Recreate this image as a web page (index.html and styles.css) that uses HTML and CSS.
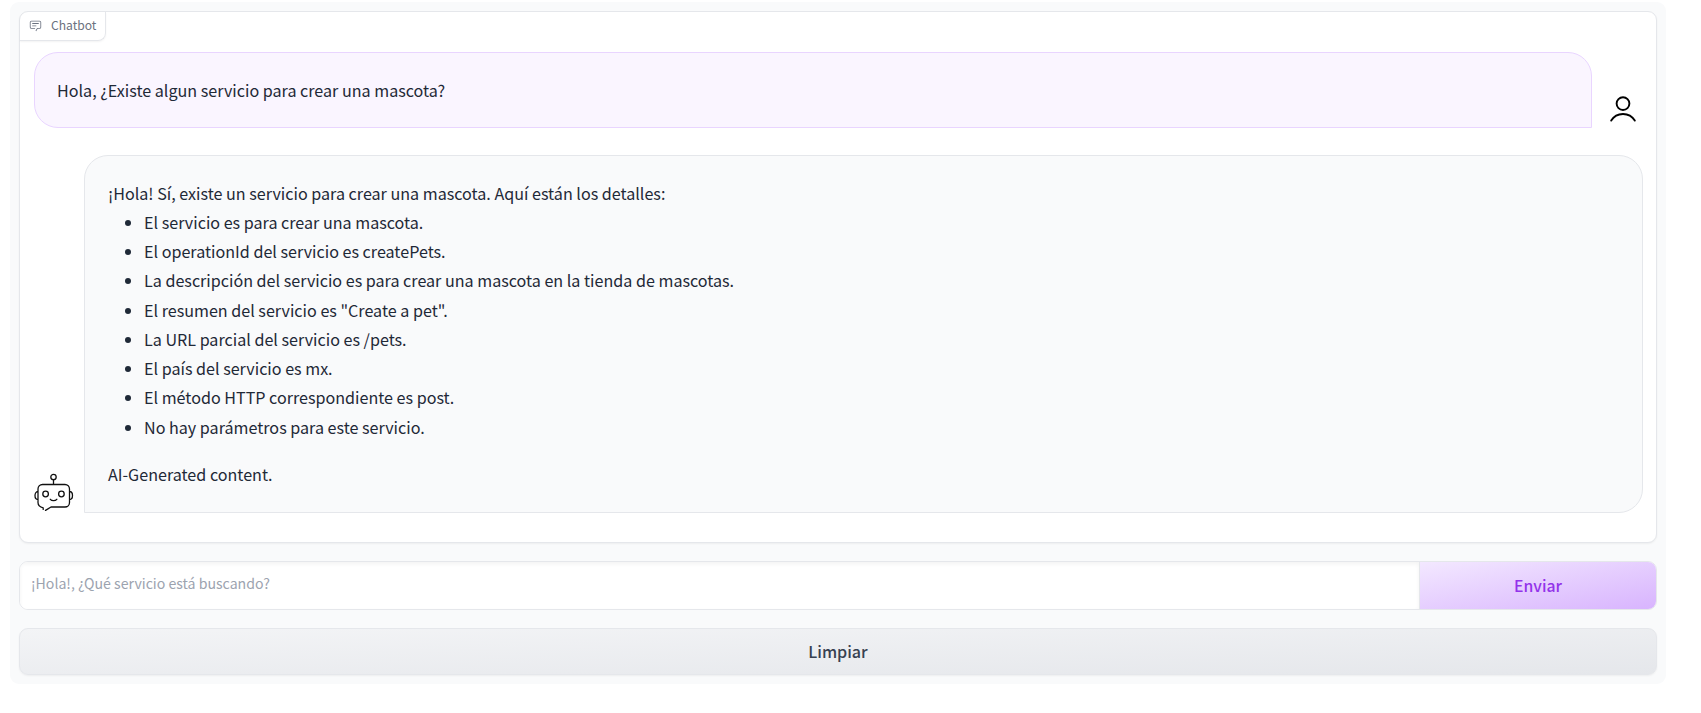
FILE: index.html
```html
<!DOCTYPE html>
<html lang="es">
<head>
<meta charset="utf-8">
<title>Chatbot</title>
<link rel="stylesheet" href="styles.css">
</head>
<body>
<main class="app">
  <section class="panel">
    <div class="label">
      <svg class="label-icon" viewBox="0 0 32 32" fill="currentColor"><path d="M17.74 30 16 29l4-7h6a2 2 0 0 0 2-2V8a2 2 0 0 0-2-2H6a2 2 0 0 0-2 2v12a2 2 0 0 0 2 2h9v2H6a4 4 0 0 1-4-4V8a4 4 0 0 1 4-4h20a4 4 0 0 1 4 4v12a4 4 0 0 1-4 4h-4.84Z"/><path d="M8 10h16v2H8zM8 16h10v2H8z"/></svg>
      <span>Chatbot</span>
    </div>
    <div class="row row-user">
      <div class="bubble bubble-user"><p>Hola, ¿Existe algun servicio para crear una mascota?</p></div>
      <svg class="avatar avatar-user" viewBox="0 0 28 28" fill="none" stroke="#000" stroke-width="1.9" stroke-linecap="round"><circle cx="14" cy="7.6" r="6.4"/><path d="M2.2 24.6C7.5 15.7 20.5 15.7 25.8 24.6"/></svg>
    </div>
    <div class="row row-bot">
      <svg class="avatar avatar-bot" viewBox="0 0 40 40" fill="none" stroke="#111" stroke-width="1.3" stroke-linecap="round" stroke-linejoin="round"><circle cx="19.5" cy="4" r="2.7"/><path d="M19.5 6.8v4.7M9.2 36.4v-1.6C6 34 4 32.3 4 29.5V16a4.5 4.5 0 0 1 4.5-4.5H31a4.5 4.5 0 0 1 4.5 4.5v13.5A4.5 4.5 0 0 1 31 34H17l-5.5 3.4M4 18.5c-4 0-4 8 0 8M35.5 18.5c4 0 4 8 0 8M16.3 26.3c1.500 1.800 5 1.800 6.500 0"/><circle cx="11.6" cy="21" r="2.8"/><circle cx="27.4" cy="21" r="2.8"/></svg>
      <div class="bubble bubble-bot">
        <p>¡Hola! Sí, existe un servicio para crear una mascota. Aquí están los detalles:</p>
        <ul>
          <li>El servicio es para crear una mascota.</li>
          <li>El operationId del servicio es createPets.</li>
          <li>La descripción del servicio es para crear una mascota en la tienda de mascotas.</li>
          <li>El resumen del servicio es "Create a pet".</li>
          <li>La URL parcial del servicio es /pets.</li>
          <li>El país del servicio es mx.</li>
          <li>El método HTTP correspondiente es post.</li>
          <li>No hay parámetros para este servicio.</li>
        </ul>
        <p>AI-Generated content.</p>
      </div>
    </div>
  </section>
  <div class="composer">
    <input class="prompt" type="text" placeholder="¡Hola!, ¿Qué servicio está buscando?">
    <button class="send">Enviar</button>
  </div>
  <button class="clear">Limpiar</button>
</main>
</body>
</html>
```
FILE: styles.css
```css
* { box-sizing: border-box; }
body {
  margin: 0;
  padding: 2px 35px 0 10px;
  background: #fff;
  color: #1f2937;
  font-family: "Noto Sans CJK JP", "Noto Sans CJK SC", "Open Sans", sans-serif;
}
p { margin: 0; }
button, input { font-family: inherit; margin: 0; }
.app {
  height: 682px;
  padding: 9px;
  border-radius: 9px;
  background: #f9fafb;
  display: flex;
  flex-direction: column;
  gap: 18px;
}
.panel {
  height: 532px;
  border: 1px solid #e5e7eb;
  border-radius: 9px;
  background: #fff;
  box-shadow: 0 1px 2px rgba(0, 0, 0, 0.05);
  display: flex;
  flex-direction: column;
}
.label {
  align-self: flex-start;
  width: 86px;
  height: 29px;
  padding: 0 0 2px 9px;
  display: flex;
  align-items: center;
  gap: 9px;
  border: solid #e5e7eb;
  border-width: 0 1px 1px 0;
  border-radius: 8px 0 8px 0;
  box-shadow: 0 1px 2px rgba(0, 0, 0, 0.05);
  color: #6b7280;
  font-size: 12.1px;
  line-height: 20px;
}
.label-icon { width: 13px; height: 13px; }
.row { display: flex; align-items: flex-end; }
.row-user { margin: 11px 0 0 14px; }
.row-bot { margin: 27px 13px 0 14px; }
.bubble {
  flex: 1;
  border: 1px solid;
  font-size: 16.12px;
  line-height: 29.25px;
}
.bubble-user {
  height: 76px;
  padding: 23px 22px;
  border-color: #e9d5ff;
  border-radius: 24px 24px 0 24px;
  background: #faf5ff;
}
.bubble-bot {
  height: 358px;
  padding: 22.6px 22px 21px 23px;
  border-color: #e5e7eb;
  border-radius: 24px 24px 24px 0;
  background: #f9fafb;
}
.bubble ul { margin: 0 0 18px; padding-left: 36px; }
.avatar { flex: none; }
.avatar-user { width: 28px; height: 28px; margin: 0 19px 4px 17px; }
.avatar-bot { width: 40px; height: 40px; margin-right: 10px; }
.composer {
  height: 49px;
  display: flex;
  overflow: hidden;
  border: 1px solid #e5e7eb;
  border-radius: 9px;
  background: #fff;
}
.prompt {
  flex: 1;
  border: 0;
  padding: 0 12px 5px 11px;
  background: #fff;
  box-shadow: inset 0 2px 4px rgba(0, 0, 0, 0.05);
  font-size: 14.13px;
}
.prompt::placeholder { color: #9ca3af; opacity: 1; }
.send {
  width: 237px;
  padding: 0;
  border: 0;
  border-left: 1px solid #e5e7eb;
  background: linear-gradient(to bottom right, #f3e8ff, #d8b4fe);
  color: #9333ea;
  font-size: 15.8px;
  font-weight: 500;
}
.clear {
  height: 47px;
  padding: 0 0 2px;
  border: 1px solid #e5e7eb;
  border-radius: 9px;
  background: linear-gradient(to bottom right, #f3f4f6, #e5e7eb);
  box-shadow: 0 1px 2px rgba(0, 0, 0, 0.05);
  color: #374151;
  font-size: 16.1px;
  font-weight: 500;
}
```
